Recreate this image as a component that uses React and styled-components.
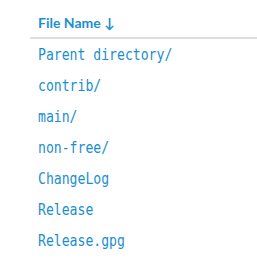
import React from "react";
import styled, { createGlobalStyle } from "styled-components";

const GlobalStyle = createGlobalStyle`
  body {
    margin: 0;
    background: #fff;
  }
`;

const files = [
  "Parent directory/",
  "contrib/",
  "main/",
  "non-free/",
  "ChangeLog",
  "Release",
  "Release.gpg",
];

export default function App() {
  return (
    <>
      <GlobalStyle />
      <StyledListing>
        <StyledHeader>
          <StyledHeaderLink href="#">File Name ↓</StyledHeaderLink>
        </StyledHeader>
        {files.map((name) => (
          <StyledRow key={name}>
            <StyledFileLink href="#">{name}</StyledFileLink>
          </StyledRow>
        ))}
      </StyledListing>
    </>
  );
}

const StyledListing = styled.div`
  margin-left: 30px;
  padding-top: 8px;
`;

const StyledHeader = styled.div`
  height: 29px;
  display: flex;
  align-items: center;
  padding-left: 8px;
  border-bottom: 2px solid #dddddd;
`;

const StyledHeaderLink = styled.a`
  font-family: "Lato", "Liberation Sans", sans-serif;
  font-weight: 700;
  font-size: 14px;
  color: #1b8ecf;
  text-decoration: none;
`;

const StyledRow = styled.div`
  height: 31px;
  display: flex;
  align-items: center;
  padding-left: 8px;
`;

/* narrow monospace look: DejaVu Sans Mono squeezed horizontally */
const StyledFileLink = styled.a`
  display: inline-block;
  font-family: "DejaVu Sans Mono", monospace;
  font-size: 16px;
  color: #1b8ecf;
  text-decoration: none;
  white-space: nowrap;
  transform: scaleX(0.82);
  transform-origin: left center;
`;
